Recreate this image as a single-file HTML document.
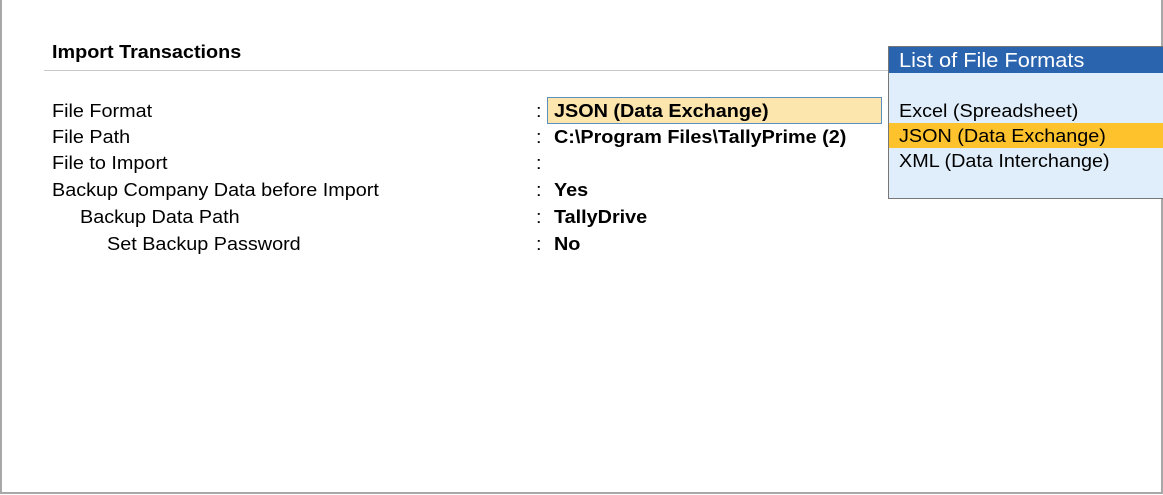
<!DOCTYPE html>
<html><head><style>
body{margin:0;width:1163px;height:495px;overflow:hidden;background:#fff;font-family:"Liberation Sans",Arial,sans-serif;color:#000;}
.frame{position:absolute;left:0;top:0;width:1159px;height:492px;border:2px solid #a8a8a8;border-top:none;}
.t{position:absolute;font-size:18px;line-height:20px;white-space:nowrap;transform:scaleX(1.1);transform-origin:0 0;margin-top:1px;}
.b{font-weight:bold;}
</style></head><body>
<div class="frame"></div>
<div class="t b" style="left:52px;top:41px;">Import Transactions</div>
<div style="position:absolute;left:44px;top:70px;width:846px;height:1px;background:#c8c8c8"></div>
<div style="position:absolute;left:547px;top:97px;width:333px;height:25px;background:#fde6ae;border:1px solid #5a8fc0"></div>
<div class="t" style="left:52px;top:100px">File Format</div>
<div class="t" style="left:52px;top:126px">File Path</div>
<div class="t" style="left:52px;top:152px">File to Import</div>
<div class="t" style="left:52px;top:179px">Backup Company Data before Import</div>
<div class="t" style="left:80px;top:206px">Backup Data Path</div>
<div class="t" style="left:107px;top:233px">Set Backup Password</div>
<div class="t" style="left:536px;top:100px">:</div>
<div class="t" style="left:536px;top:126px">:</div>
<div class="t" style="left:536px;top:152px">:</div>
<div class="t" style="left:536px;top:179px">:</div>
<div class="t" style="left:536px;top:206px">:</div>
<div class="t" style="left:536px;top:233px">:</div>
<div class="t b" style="left:554px;top:100px">JSON (Data Exchange)</div>
<div class="t b" style="left:554px;top:126px">C:\Program Files\TallyPrime (2)</div>
<div class="t b" style="left:554px;top:179px">Yes</div>
<div class="t b" style="left:554px;top:206px">TallyDrive</div>
<div class="t b" style="left:554px;top:233px">No</div>
<div style="position:absolute;left:888px;top:46px;width:275px;height:151px;background:#dfeefa;border:1px solid #777;border-right:none;"></div>
<div style="position:absolute;left:889px;top:47px;width:274px;height:26px;background:#2a63ae"></div>
<div class="t" style="left:899px;top:49px;color:#fff;font-size:20px;line-height:22px;transform:scaleX(1.09)">List of File Formats</div>
<div style="position:absolute;left:889px;top:123px;width:274px;height:25px;background:#fdc22c"></div>
<div class="t" style="left:899px;top:100px">Excel (Spreadsheet)</div>
<div class="t" style="left:899px;top:125px">JSON (Data Exchange)</div>
<div class="t" style="left:899px;top:150px">XML (Data Interchange)</div>
</body></html>
